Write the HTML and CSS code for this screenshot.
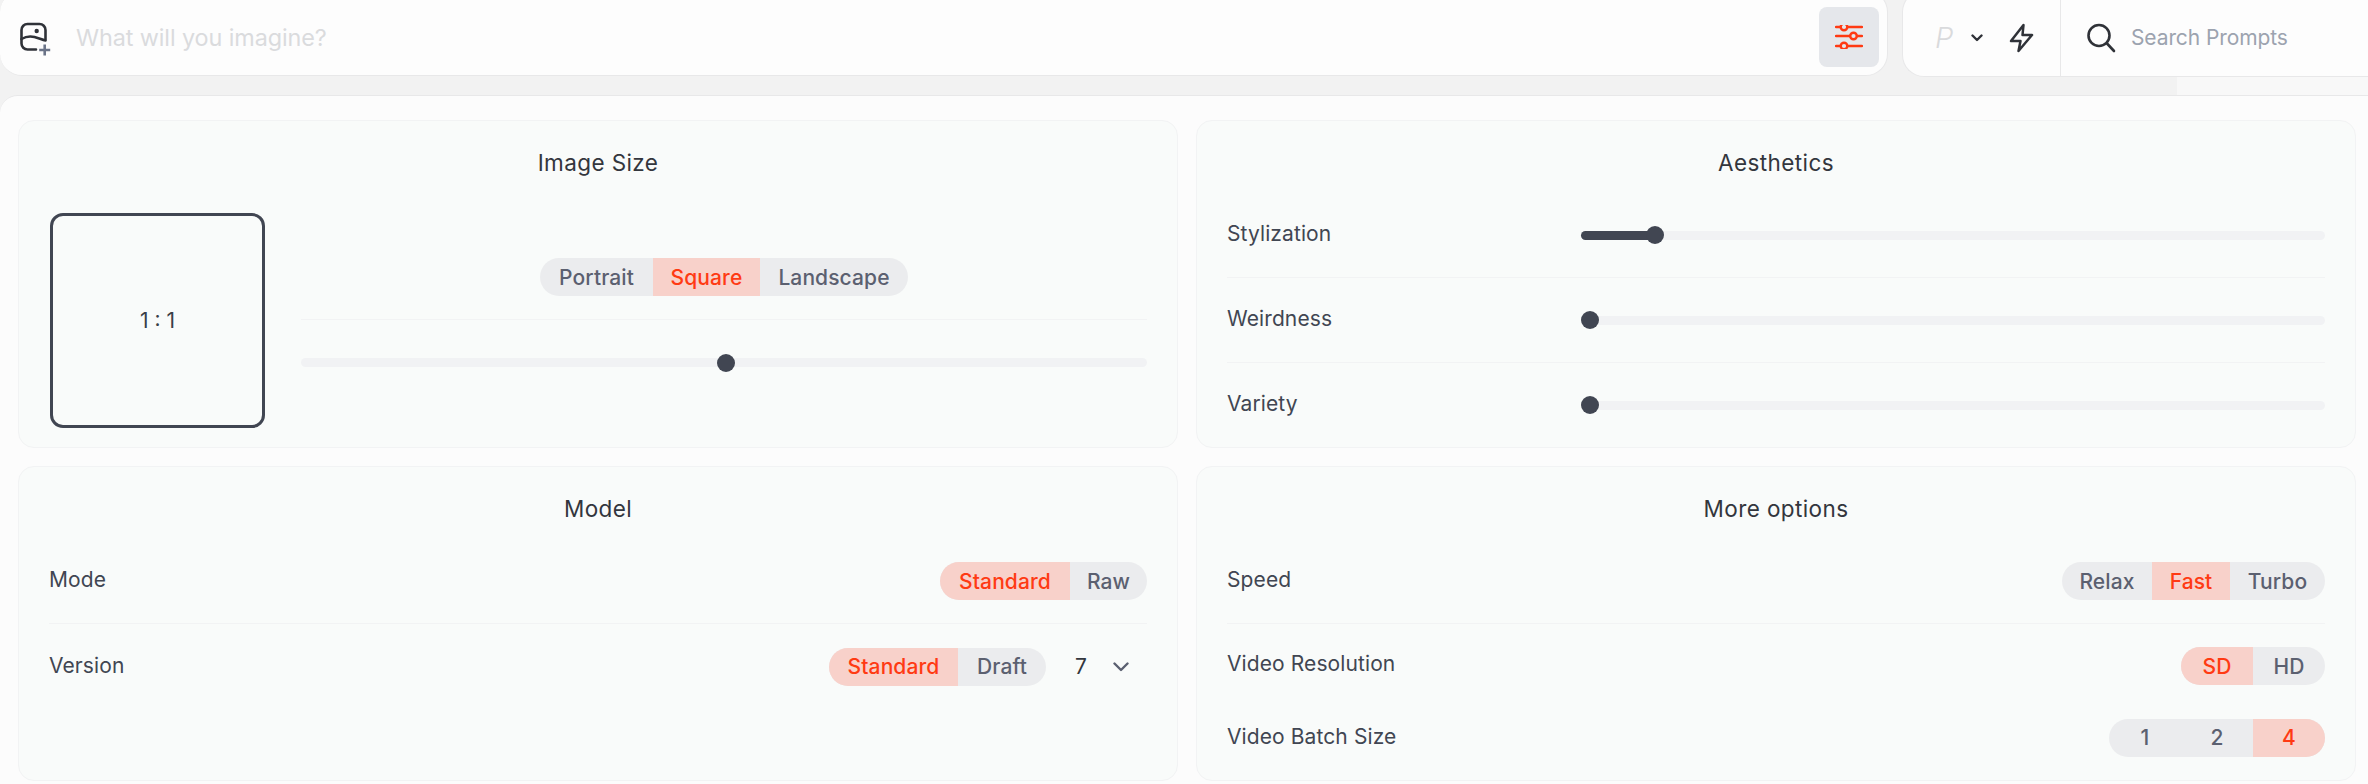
FILE: index.html
```html
<!DOCTYPE html>
<html lang="en">
<head>
<meta charset="utf-8">
<title>Imagine settings</title>
<link rel="stylesheet" href="styles.css">
</head>
<body>
<header class="topbar">
  <div class="prompt-bar">
    <svg class="icon-add" viewBox="0 0 36 36" width="36" height="36" fill="none">
      <path d="M18 28.500H9.500a6 6 0 0 1-6-6V9a6 6 0 0 1 6-6h12a6 6 0 0 1 6 6v9.500" stroke="#2f3238" stroke-width="2.600" stroke-linecap="round"/>
      <path d="M3.500 18c5-3 9-3 13-2 4 1 8 3 11 3.500" stroke="#2f3238" stroke-width="2.600" stroke-linecap="round"/>
      <circle cx="18.700" cy="10" r="2.200" fill="#2f3238"/>
      <path d="M26.700 23.500v11M21.200 29h11" stroke="#6b7488" stroke-width="2.600"/>
    </svg>
    <span class="placeholder">What will you imagine?</span>
    <button class="filter-btn" type="button" aria-label="Settings">
      <svg viewBox="0 0 28 24" width="28" height="24" fill="none" stroke="#ff3a13" stroke-width="2.400" stroke-linecap="round">
        <path d="M1 2h4.500M12.500 2H27M1 11h14M22 11h5M1 21h4.500M12.500 21H27"/>
        <circle cx="9" cy="2" r="3.300"/>
        <circle cx="18.500" cy="11" r="3.300"/>
        <circle cx="9" cy="21" r="3.300"/>
      </svg>
    </button>
  </div>
  <div class="tools-bar">
    <div class="tools">
      <span class="p-mark">P</span>
      <svg class="chev-small" viewBox="0 0 12 8" width="12" height="8" fill="none" stroke="#2f3238" stroke-width="2.400" stroke-linecap="round" stroke-linejoin="round"><path d="M1.500 1.500 6 6l4.500-4.500"/></svg>
      <svg class="bolt" viewBox="0 0 25 30" width="25" height="30" fill="none" stroke="#2f3238" stroke-width="2.500" stroke-linejoin="round"><path d="M14.500 2 2 18h9.500L9.500 28 23 12h-9.500z"/></svg>
    </div>
    <div class="search">
      <svg viewBox="0 0 30 30" width="30" height="30" fill="none" stroke="#2f3238" stroke-width="2.600" stroke-linecap="round"><circle cx="13" cy="12.500" r="10.500"/><path d="m21 20.500 7 7.500"/></svg>
      <span class="search-text">Search Prompts</span>
    </div>
  </div>
</header>

<main class="panel">
  <section class="card">
    <h2 class="card-title">Image Size</h2>
    <div class="size-body">
      <div class="ratio-box">1 : 1</div>
      <div class="size-controls">
        <div class="row row-center">
          <div class="seg">
            <span class="seg-item w113">Portrait</span>
            <span class="seg-item w107 is-active">Square</span>
            <span class="seg-item w148">Landscape</span>
          </div>
        </div>
        <div class="row row-plain">
          <div class="slider"><span class="thumb" style="--v:.502"></span></div>
        </div>
      </div>
    </div>
  </section>

  <section class="card">
    <h2 class="card-title">Aesthetics</h2>
    <div class="row">
      <span class="label">Stylization</span>
      <div class="slider slider-wide"><span class="fill" style="width:10%"></span><span class="thumb" style="--v:.09"></span></div>
    </div>
    <div class="row">
      <span class="label">Weirdness</span>
      <div class="slider slider-wide"><span class="thumb" style="--v:0"></span></div>
    </div>
    <div class="row row-plain row-last">
      <span class="label">Variety</span>
      <div class="slider slider-wide"><span class="thumb" style="--v:0"></span></div>
    </div>
  </section>

  <section class="card">
    <h2 class="card-title">Model</h2>
    <div class="row">
      <span class="label">Mode</span>
      <div class="seg">
        <span class="seg-item w130 is-active">Standard</span>
        <span class="seg-item w77">Raw</span>
      </div>
    </div>
    <div class="row row-plain">
      <span class="label">Version</span>
      <div class="version">
        <div class="seg">
          <span class="seg-item w129 is-active">Standard</span>
          <span class="seg-item w88">Draft</span>
        </div>
        <div class="version-select">
          <span class="version-num">7</span>
          <svg viewBox="0 0 16 10" width="16" height="10" fill="none" stroke="#5b6070" stroke-width="2.400" stroke-linecap="round" stroke-linejoin="round"><path d="M1.500 1.500 8 8l6.500-6.500"/></svg>
        </div>
      </div>
    </div>
  </section>

  <section class="card">
    <h2 class="card-title">More options</h2>
    <div class="row">
      <span class="label">Speed</span>
      <div class="seg">
        <span class="seg-item w90">Relax</span>
        <span class="seg-item w78 is-active">Fast</span>
        <span class="seg-item w95">Turbo</span>
      </div>
    </div>
    <div class="row row-plain row-tight">
      <span class="label">Video Resolution</span>
      <div class="seg">
        <span class="seg-item w72 is-active">SD</span>
        <span class="seg-item w72">HD</span>
      </div>
    </div>
    <div class="row row-plain row-end">
      <span class="label">Video Batch Size</span>
      <div class="seg">
        <span class="seg-item w72">1</span>
        <span class="seg-item w72">2</span>
        <span class="seg-item w72 is-active">4</span>
      </div>
    </div>
  </section>
</main>
</body>
</html>
```
FILE: styles.css
```css
* { box-sizing: border-box; }

html, body {
  margin: 0;
  height: 784px;
  overflow: hidden;
}

body {
  font-family: "Inter", "Noto Sans", sans-serif;
  color: #414652;
  background: linear-gradient(to right, #f2f2f2 0, #f2f2f2 2177px, #f8f8f8 2177px);
}

.topbar {
  display: flex;
  height: 77px;
  margin-bottom: 18px;
  gap: 14px;
}

.prompt-bar,
.tools-bar {
  height: 87px;
  margin-top: -10px;
  padding-top: 8px;
  background: #fdfdfd;
  border: 1px solid #e8e8e9;
  border-radius: 22px;
  display: flex;
  align-items: center;
}

.prompt-bar {
  width: 1888px;
  height: 86px;
  border-left: 0;
  padding-left: 18px;
  padding-right: 8px;
}

.icon-add { flex: none; margin-top: 4px; }

.placeholder {
  margin-left: 22px;
  flex: 1;
  font-size: 23.4px;
  letter-spacing: -0.1px;
  color: #dadbdd;
}

.filter-btn {
  width: 60px;
  height: 60px;
  padding: 0;
  border: 0;
  border-radius: 8px;
  background: #e5e7eb;
  display: flex;
  align-items: center;
  justify-content: center;
}

.tools-bar {
  flex: 1;
  border-right: 0;
  border-top-right-radius: 0;
  border-bottom-right-radius: 0;
}

.tools {
  width: 158px;
  height: 100%;
  padding-left: 32px;
  display: flex;
  align-items: center;
  border-right: 1px solid #e8e8e9;
}

.p-mark {
  width: 36px;
  font-size: 29px;
  font-style: italic;
  font-weight: 300;
  color: #d9dadc;
}

.chev-small { flex: none; margin-right: 26px; }
.bolt { flex: none; }

.search {
  display: flex;
  align-items: center;
  gap: 15px;
  padding-left: 25px;
}

.search-text {
  font-size: 21px;
  letter-spacing: -0.1px;
  color: #9ca3af;
}

.panel {
  height: 700px;
  padding: 24px 12px 0 18px;
  background: #fcfcfc;
  border-top: 1px solid #e8e8e9;
  border-top-left-radius: 18px;
  display: grid;
  grid-template-columns: 1160px 1160px;
  grid-template-rows: 328px 315px;
  column-gap: 18px;
  row-gap: 18px;
}

.card {
  background: #f9fbfa;
  border: 1px solid #f2f3f4;
  border-radius: 16px;
  padding: 0 30px;
  display: flex;
  flex-direction: column;
}

.card-title {
  flex: none;
  height: 72px;
  margin: 0;
  padding-top: 27px;
  text-align: center;
  font-size: 22.5px;
  line-height: 30px;
  letter-spacing: 0.4px;
  font-weight: 400;
  color: #33363d;
}

.row {
  flex: none;
  height: 85px;
  display: flex;
  align-items: center;
  justify-content: space-between;
  border-bottom: 1px solid #f2f3f4;
}

.row-plain { border-bottom: 0; }
.row-center { justify-content: center; }
.row-last { height: 84px; }
.row-tight { height: 72px; align-items: flex-start; padding-top: 23px; }
.row-end { height: 83px; }

.label {
  margin-top: -2px;
  font-size: 21px;
  line-height: 38px;
  letter-spacing: 0.1px;
  color: #414652;
}

.size-body {
  flex: 1;
  display: flex;
  align-items: center;
  gap: 36px;
  padding-left: 1px;
}

.ratio-box {
  flex: none;
  width: 215px;
  height: 215px;
  border: 3px solid #414652;
  border-radius: 13px;
  display: flex;
  align-items: center;
  justify-content: center;
  font-size: 21px;
  color: #3b3f48;
}

.size-controls { flex: 1; }

.slider {
  position: relative;
  width: 100%;
  height: 9px;
  border-radius: 5px;
  background: #f1f2f4;
}

.slider-wide {
  flex: none;
  width: 744px;
}

.fill {
  position: absolute;
  top: 0;
  bottom: 0;
  left: 0;
  border-radius: 5px;
  background: #414652;
}

.thumb {
  position: absolute;
  top: -4.5px;
  left: calc((100% - 18px) * var(--v));
  width: 18px;
  height: 18px;
  border-radius: 50%;
  background: #414652;
}

.seg {
  display: flex;
  height: 38px;
  border-radius: 19px;
  overflow: hidden;
  background: #ebecee;
}

.seg-item {
  display: flex;
  align-items: center;
  justify-content: center;
  font-size: 21px;
  font-weight: 500;
  letter-spacing: 0.1px;
  color: #5b6070;
}

.seg-item.is-active {
  background: #f8d1ca;
  color: #ff3a13;
}

.w72 { width: 72px; }
.w77 { width: 77px; }
.w78 { width: 78px; }
.w88 { width: 88px; }
.w90 { width: 90px; }
.w95 { width: 95px; }
.w107 { width: 107px; }
.w113 { width: 113px; }
.w129 { width: 129px; }
.w130 { width: 130px; }
.w148 { width: 148px; }

.version {
  display: flex;
  align-items: center;
}

.version-select {
  width: 101px;
  padding-left: 29px;
  display: flex;
  align-items: center;
  gap: 26px;
}

.version-num {
  font-size: 21px;
  font-weight: 400;
  color: #33363d;
}
```
